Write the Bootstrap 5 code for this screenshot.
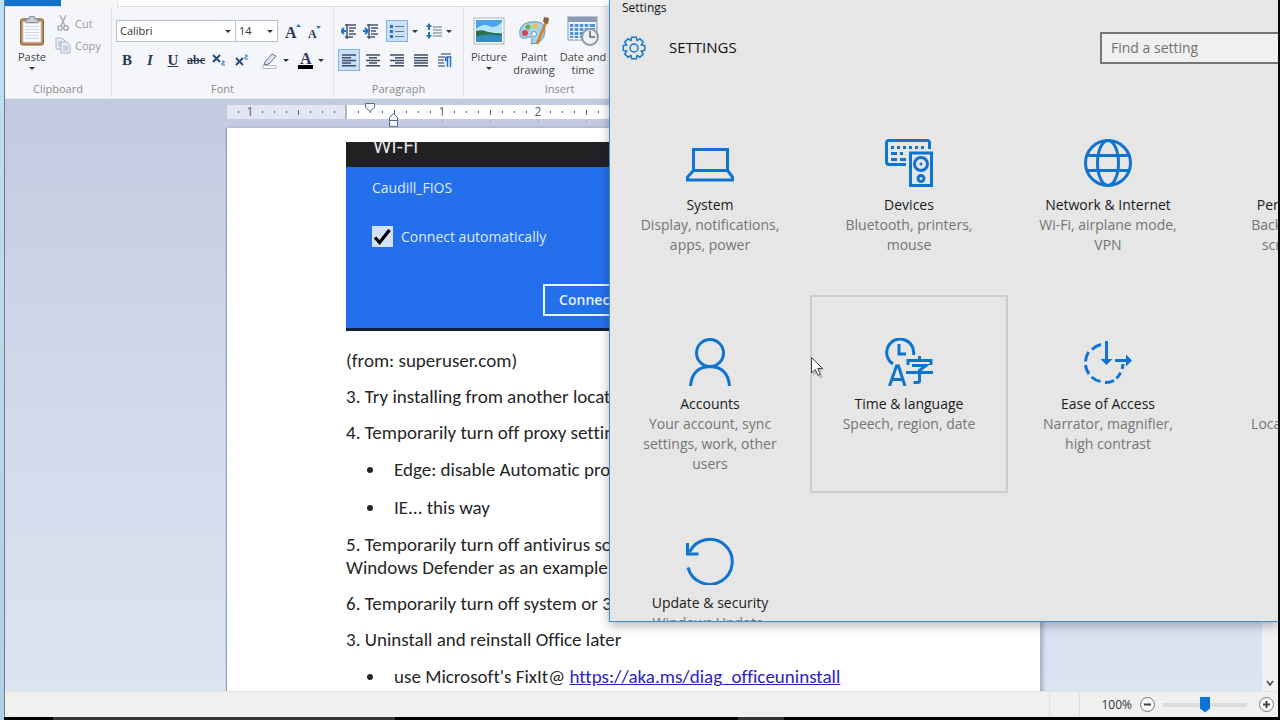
<!DOCTYPE html>
<html lang="en">
<head>
<meta charset="utf-8">
<meta name="viewport" content="width=device-width, initial-scale=1">
<title>Document - WordPad</title>
<link href="https://cdn.jsdelivr.net/npm/bootstrap@5.3.0/dist/css/bootstrap.min.css" rel="stylesheet">
<style>
  :root { --accent: #0f74cf; }
  body { font-family: "Open Sans", sans-serif; color: #111; background: #000; }
  svg { display: block; flex: none; }
  button { color: inherit; font: inherit; }
  .desktop { background: linear-gradient(#bfe0f4, #b3cfe3); padding: 0 2px 0 4px; }
  .edge { background: #000; width: 2px; right: 0; }
  .wordpad { border-left: 1px solid #6f7a8c; }

  /* ribbon */
  .tabs { height: 7px; border-bottom: 1px solid #dcdfe3; background: #fff; }
  .file-tab { width: 56px; background: #1272cc; }
  .home-tab { width: 57px; background: #f5f6f8; margin-bottom: -1px; border-right: 1px solid #dcdfe3; }
  .ribbon { background: #f5f6f9; height: 92px; font-size: 11px; line-height: 13px; color: #444; border-bottom: 1px solid #e6eaf2; }
  .group { border-right: 1px solid #e4e6ec; padding: 9px 4px 0; }
  .group-name { color: #8c8c8c; line-height: 16px; height: 17px; }
  .rows { display: flex; flex-direction: column; gap: 7px; padding-top: 4px; }
  .tool { border: 1px solid transparent; background: none; padding: 0; width: 22px; height: 22px; display: flex; align-items: center; justify-content: center; flex: none; }
  .tool.on { background: #c9e0f7; border-color: #7eb4ea; }
  .tool.wide { width: 34px; gap: 4px; }
  .glyph { font-family: "Liberation Serif", serif; font-weight: bold; font-size: 15px; color: #2b3a55; fill: #2b3a55; }
  .strike { font-size: 12px; text-decoration: line-through; }
  .big { border: 0; background: none; padding: 0; display: flex; flex-direction: column; align-items: center; gap: 4px; }
  .edit-cmd { border: 0; background: none; padding: 0; display: flex; align-items: center; gap: 4px; height: 14px; color: #9a9a9a; }
  .edit-cmd + .edit-cmd { height: 22px; }
  .caret { width: 0; height: 0; border: 3px solid transparent; border-top-color: #333; border-bottom: 0; }
  .combo { appearance: none; height: 22px; border: 1px solid #b8c2d0; border-radius: 0; padding: 0 14px 0 3px; font-size: 11px; line-height: 20px; color: #333; background: #fff url("data:image/svg+xml,%3Csvg xmlns='http://www.w3.org/2000/svg' viewBox='0 0 6 3'%3E%3Cpath d='M0 0h6L3 3z' fill='%23333'/%3E%3C/svg%3E") no-repeat right 4px center / 6px 3px; }

  /* page */
  .work { background: linear-gradient(#c2cae0, #d0d9ea 50%, #dbe5f2); }
  .sheet-col { width: 813px; }
  .ruler-row { height: 29px; padding-top: 6px; }
  .ruler-row svg { overflow: visible; }
  .sheet { background: #fff; padding: 14px 119px 0 119px; box-shadow: -1px 0 1px #929fb6, 3px 0 4px #a3b0c6; font-family: Carlito, Lato, sans-serif; font-size: 19px; line-height: 23px; color: #262626; font-variant-ligatures: none; }
  .sheet p, .sheet li { margin-bottom: 13px; }
  .sheet li { line-height: 25px; padding-left: 8px; }
  .sheet ul { padding-left: 40px; margin-bottom: 0; }
  .sheet a { color: #2b22c8; }
  .wifi { width: 400px; margin-bottom: 18px; background: #246fec; color: #dcebff; border-bottom: 3px solid #10203c; font-family: "Open Sans", sans-serif; font-size: 14px; line-height: 20px; }
  .wifi-head { background: #212123; color: #eee; height: 25px; padding-left: 27px; font-size: 20px; line-height: 8px; }
  .wifi-body { padding: 11px 0 12px 26px; height: 161px; }
  .auto-check { appearance: none; width: 21px; height: 21px; margin: 0; background: #d4dffa url("data:image/svg+xml,%3Csvg xmlns='http://www.w3.org/2000/svg' viewBox='0 0 21 21'%3E%3Cpath d='M3 11.500l4.600 5L17.500 4' fill='none' stroke='%23000' stroke-width='3.300'/%3E%3C/svg%3E"); }
  .connect { width: 88px; height: 32px; border: 2px solid #e8f1ff; background: none; font-weight: 600; color: #e8f1ff; margin-left: 171px; padding: 0; }
  .vbar { width: 16px; background: #eff0f2; color: #444; }

  /* status bar */
  .status { height: 26px; background: #f0f0ef; border-top: 1px solid #e2e2e2; font-size: 12px; color: #333; }
  .status .part { border-left: 1px solid #e0e0e0; width: 30px; }
  .status .part + .part { width: 22px; }
  .round { width: 15px; height: 15px; border: 0; background: none; padding: 0; }
  .zoom-range { appearance: none; width: 84px; height: 17px; margin: 0; background: linear-gradient(#dcdcdc, #dcdcdc) no-repeat center / 100% 4px; }
  .zoom-range::-webkit-slider-thumb { appearance: none; width: 10px; height: 16px; border: 0; background: #0a75d8; clip-path: polygon(0 0, 100% 0, 100% 75%, 50% 100%, 0 75%); }
  .taskbar { height: 3px; background: linear-gradient(90deg, #000 49px, #363636 49px 391px, #000 391px 734px, #333 734px 780px, #000 780px); }

  /* settings window */
  .settings { left: 609px; top: 0; right: 2px; height: 622px; background: #e6e6e6; border: 1px solid #3f8fca; border-top: 0; border-right: 0; box-shadow: 0 3px 10px rgba(20, 30, 50, .35); }
  .caption { font-size: 12px; line-height: 16px; padding-left: 12px; }
  .settings-head { padding: 16px 0 33px 12px; font-size: 15px; font-weight: 500; height: 80px; gap: 23px; }
  .find { width: 280px; height: 32px; border: 2px solid #767676; border-radius: 0; background: #f0f0f0; padding: 0 9px; font-size: 14px; flex: none; }
  .find::placeholder { color: #707070; }
  .find-slot { margin-left: auto; width: 178px; overflow: hidden; }
  .tiles { display: grid; grid-template-columns: repeat(4, 198px); grid-auto-rows: 198px; gap: 1px; padding-left: 1px; }
  .tile { border: 1px solid transparent; padding: 42px 22px 0; text-align: center; text-decoration: none; color: #1b1b1b; font-size: 14px; line-height: 20px; display: flex; flex-direction: column; align-items: center; }
  .tile svg, .tile .blank { width: 48px; height: 48px; margin-bottom: 8px; flex: none; fill: none; stroke: var(--accent); stroke-width: 3; }
  .tile small { color: #757575; font-size: 14px; display: block; }
  .tile.hover { border: 2px solid #cdcdcd; padding: 41px 21px 0; }
  .pointer { left: 810px; top: 356px; }
</style>
</head>
<body class="vh-100 overflow-hidden">
<div class="desktop position-relative h-100 d-flex flex-column overflow-hidden">
  <main class="wordpad flex-fill d-flex flex-column overflow-hidden">
    <div class="tabs d-flex flex-shrink-0"><div class="file-tab"></div><div class="home-tab"></div></div>

    <div class="ribbon d-flex flex-shrink-0">
      <section class="group d-flex flex-column" style="width:107px">
        <div class="d-flex flex-fill">
          <button class="big ms-2 me-2" style="width:30px" type="button">
            <svg width="26" height="30" viewBox="0 1 26 31" preserveAspectRatio="none"><rect x="1.500" y="4" width="23" height="27" rx="2" fill="#b98a52" stroke="#8a6434"/><path d="M4 7h18v21H4z" fill="#fafcff" stroke="#ccd"/><path d="M6 12h14M6 15h14M6 18h14M6 21h14M6 24h14" stroke="#cbd3df"/><path d="M7 8V4h3q0-3 3-3t3 3h3v4z" fill="#c9ced6" stroke="#777f8b"/></svg>
            <span>Paste</span><i class="caret"></i>
          </button>
          <div class="d-flex flex-column gap-1">
            <button class="edit-cmd" type="button">
              <svg width="16" height="18" viewBox="0 0 16 18" fill="none" stroke="#a9adb5" stroke-width="1.500"><path d="M5 1l5 11M11 1L6 12"/><circle cx="5" cy="14" r="2.200"/><circle cx="11" cy="14" r="2.200"/></svg>Cut</button>
            <button class="edit-cmd" type="button">
              <svg width="16" height="17" viewBox="0 0 16 17" fill="#e9edf6" stroke="#a9b3ca"><path d="M1 1h6l3 3v8H1z"/><path d="M3 5h4M3 7h4M3 9h4"/><path d="M6 5h6l3 3v8H6z"/><path d="M8 9h5M8 11h5M8 13h5"/></svg>Copy</button>
          </div>
        </div>
        <div class="group-name text-center">Clipboard</div>
      </section>

      <section class="group d-flex flex-column" style="width:222px">
        <div class="rows flex-fill">
          <div class="d-flex">
            <select class="combo" style="width:120px" aria-label="Font family"><option>Calibri</option></select>
            <select class="combo border-start-0" style="width:42px" aria-label="Font size"><option>14</option></select>
            <button class="tool glyph ms-1" type="button" aria-label="Grow font"><svg width="16" height="17" viewBox="0 0 16 17"><text x="0" y="15" font-size="16">A</text><path d="M11 4l2.500-3L16 4z" fill="#2f78c4"/></svg></button>
            <button class="tool glyph" type="button" aria-label="Shrink font"><svg width="16" height="17" viewBox="0 0 16 17"><text x="1" y="15" font-size="12">A</text><path d="M9 3h5l-2.500 3z" fill="#2f78c4"/></svg></button>
          </div>
          <div class="d-flex" style="gap:1px">
            <button class="tool glyph" type="button">B</button>
            <button class="tool glyph fst-italic" type="button">I</button>
            <button class="tool glyph text-decoration-underline" type="button">U</button>
            <button class="tool glyph strike" type="button">abc</button>
            <button class="tool" type="button" aria-label="Subscript"><svg width="14" height="14" viewBox="0 0 14 14"><path d="M1 2l7 7M8 2L1 9" stroke="#2b4a75" stroke-width="2"/><path d="M10 8h2v2h-2v2h3" fill="none" stroke="#2f78c4"/></svg></button>
            <button class="tool" type="button" aria-label="Superscript"><svg width="14" height="14" viewBox="0 0 14 14"><path d="M1 5l7 7M8 5l-7 7" stroke="#2b4a75" stroke-width="2"/><path d="M10 2h2v2h-2v2h3" fill="none" stroke="#2f78c4"/></svg></button>
            <button class="tool wide ms-1" type="button" aria-label="Highlight"><svg width="18" height="18" viewBox="0 0 18 18"><path d="M4 11L11 3l4 2-7 8-5 1z" fill="#dde3ee" stroke="#66738c"/><path d="M2 14.500h13v3H2z" fill="#fff" stroke="#b5bccb"/></svg><i class="caret"></i></button>
            <button class="tool wide" type="button" aria-label="Text color"><svg class="glyph" width="17" height="18" viewBox="0 0 17 18"><text x="3" y="13" font-size="16">A</text><path d="M1 14h15v4H1z" fill="#000"/></svg><i class="caret"></i></button>
          </div>
        </div>
        <div class="group-name text-center">Font</div>
      </section>

      <section class="group d-flex flex-column" style="width:130px">
        <div class="rows flex-fill">
          <div class="d-flex align-items-center">
            <button class="tool" type="button" aria-label="Decrease indent"><svg width="16" height="16" viewBox="0 0 16 16" fill="none" stroke="#46566f" stroke-width="1.500"><path d="M4 2h11M8 5h7M8 8h5M8 11h7M4 14h8M6 1v15"/><path d="M5 8H1m2-3L0 8l3 3" stroke="#2472c8" stroke-width="2"/></svg></button>
            <button class="tool me-1" type="button" aria-label="Increase indent"><svg width="16" height="16" viewBox="0 0 16 16" fill="none" stroke="#46566f" stroke-width="1.500"><path d="M4 2h11M8 5h7M8 8h5M8 11h7M4 14h8M6 1v15"/><path d="M0 8h5M2 5l3 3-3 3" stroke="#2472c8" stroke-width="2"/></svg></button>
            <button class="tool on" type="button" aria-label="Bullets"><svg width="16" height="14" viewBox="0 0 16 14"><path d="M1 1h3v3H1zM1 6h3v3H1zM1 11h3v3H1z" fill="#2a6cc0"/><path d="M6 2.500h9M6 7.500h9M6 12.500h9" stroke="#66758c"/></svg></button>
            <i class="caret mx-1"></i>
            <button class="tool wide" type="button" aria-label="Line spacing"><svg width="16" height="17" viewBox="0 0 16 17"><path d="M3 0l3 4H4v3H2V4H0zM3 16l3-4H4V9H2v3H0z" fill="#2472c8"/><path d="M7 4h9M7 7h9M7 10h9M7 13h9" stroke="#66758c"/></svg><i class="caret"></i></button>
          </div>
          <div class="d-flex" style="gap:2px">
            <button class="tool on" type="button" aria-label="Align left"><svg width="14" height="13" viewBox="0 0 14 13" stroke="#3f4e66" stroke-width="1.500"><path d="M0 1h14M0 3.700h9M0 6.400h14M0 9.100h9M0 11.800h14"/></svg></button>
            <button class="tool" type="button" aria-label="Center"><svg width="14" height="13" viewBox="0 0 14 13" stroke="#3f4e66" stroke-width="1.500"><path d="M0 1h14M3 3.700h8M0 6.400h14M3 9.100h8M0 11.800h14"/></svg></button>
            <button class="tool" type="button" aria-label="Align right"><svg width="14" height="13" viewBox="0 0 14 13" stroke="#3f4e66" stroke-width="1.500"><path d="M0 1h14M5 3.700h9M0 6.400h14M5 9.100h9M0 11.800h14"/></svg></button>
            <button class="tool" type="button" aria-label="Justify"><svg width="14" height="13" viewBox="0 0 14 13" stroke="#3f4e66" stroke-width="1.500"><path d="M0 1h14M0 3.700h14M0 6.400h14M0 9.100h14M0 11.800h14"/></svg></button>
            <button class="tool" type="button" aria-label="Paragraph"><svg width="14" height="15" viewBox="0 0 14 15" fill="none"><path d="M3 1h10M0 4h7M0 7h6M0 10h6M0 13h7" stroke="#66758c" stroke-width="1.500"/><path d="M9.500 14V4M12.500 14V4M13.500 4h-4q-2 0-2 2t2 2" stroke="#2472c8" stroke-width="1.500"/></svg></button>
          </div>
        </div>
        <div class="group-name text-center">Paragraph</div>
      </section>

      <section class="group d-flex flex-column" style="width:192px">
        <div class="d-flex flex-fill">
          <button class="big" type="button" style="width:42px">
            <svg width="32" height="30" viewBox="0 0 32 30"><rect x="1" y="2" width="30" height="26" fill="#fff" stroke="#a8b2c0"/><path d="M3 4h26v22H3z" fill="#4aa5e6"/><path d="M3 13q7-6 13-3t13-4v11H3z" fill="#b5e4f8"/><path d="M3 15q7-2 12 1l14 2v4H3z" fill="#297049"/><path d="M3 20q14-3 26 0v6H3z" fill="#338dc0"/></svg>
            <span>Picture</span><i class="caret"></i>
          </button>
          <button class="big" type="button" style="width:48px">
            <svg width="32" height="30" viewBox="0 0 32 30"><path d="M2 20Q0 8 12 6q16-2 15 9-1 13-14 13 3-8-3-7-6 3-8-1z" fill="#a9d3ec" stroke="#629abd"/><circle cx="7" cy="17" r="3" fill="#da4059"/><circle cx="10" cy="11" r="2.500" fill="#6daf43"/><circle cx="17" cy="10" r="2.500" fill="#f0c13f"/><circle cx="16" cy="18" r="2.500" fill="#fff" stroke="#629abd"/><path d="M29 4L19 28" stroke="#c98734" stroke-width="3"/><path d="M26 1l5 1-1 6-5-2z" fill="#935f3f"/></svg>
            <span>Paint drawing</span>
          </button>
          <button class="big" type="button" style="width:50px">
            <svg width="33" height="30" viewBox="0 0 33 30"><rect x="1" y="1" width="29" height="23" fill="#eef6ff" stroke="#8496ad"/><path d="M1 1h29v5H1z" fill="#8a9bb3"/><path d="M3 8h25v3H3zM3 12h25v3H3zM3 16h15v3H3zM3 20h12v2H3z" fill="#4e91dc"/><path d="M7 7v17M12 7v17M17 7v12M22 7v9" stroke="#e6f0fa" stroke-width="1.500"/><circle cx="23" cy="21" r="8" fill="#edf0f3" stroke="#8e969f" stroke-width="2"/><path d="M23 15v6h5" fill="none" stroke="#59616b" stroke-width="1.500"/></svg>
            <span>Date and time</span>
          </button>
        </div>
        <div class="group-name text-center">Insert</div>
      </section>
    </div>

    <div class="work flex-fill d-flex overflow-hidden">
      <div class="flex-fill d-flex flex-column align-items-center overflow-hidden">
        <div class="sheet-col ruler-row flex-shrink-0">
          <svg id="ruler" width="100%" height="23" font-family="Open Sans" font-size="12" fill="#56617a"><rect width="119" height="14" fill="#e2e6f0"/><rect x="119" width="694" height="14" fill="#fff"/><path d="M119 0v14" stroke="#6f7a92"/></svg>
        </div>
        <article class="sheet sheet-col flex-fill">
          <div class="wifi">
            <div class="wifi-head overflow-hidden">Wi-Fi</div>
            <div class="wifi-body d-flex flex-column">
              <div>Caudill_FIOS</div>
              <label class="d-flex align-items-center gap-2 mt-4 pt-1"><input class="auto-check" type="checkbox" checked>Connect automatically</label>
              <button class="connect mt-auto" type="button">Connect</button>
            </div>
          </div>
          <p>(from: superuser.com)</p>
          <p>3. Try installing from another location</p>
          <p>4. Temporarily turn off proxy settings</p>
          <ul><li>Edge: disable Automatic proxy</li><li>IE... this way</li></ul>
          <p>5. Temporarily turn off antivirus software<br>Windows Defender as an example</p>
          <p>6. Temporarily turn off system or 3rd party</p>
          <p>3. Uninstall and reinstall Office later</p>
          <ul><li>use Microsoft's FixIt@ <a href="https://aka.ms/diag_officeuninstall">https://aka.ms/diag_officeuninstall</a></li></ul>
        </article>
      </div>
      <div class="vbar d-flex align-items-end justify-content-center pb-1"><svg width="8" height="8" viewBox="0 0 8 8" fill="none" stroke="#444" stroke-width="1.500"><path d="M1 2l3 4 3-4"/></svg></div>
    </div>

    <footer class="status d-flex align-items-center justify-content-end flex-shrink-0">
      <div class="part h-100"></div><div class="part h-100"></div>
      <label for="zoom" class="me-2">100%</label>
      <button class="round" type="button" aria-label="Zoom out"><svg width="15" height="15" viewBox="0 0 15 15" fill="#fafafa" stroke="#777"><circle cx="7.500" cy="7.500" r="7"/><path d="M4 7.500h7" stroke="#444" stroke-width="2"/></svg></button>
      <input class="zoom-range mx-2" id="zoom" type="range" min="0" max="100" value="50">
      <button class="round ms-1 me-1" type="button" aria-label="Zoom in"><svg width="15" height="15" viewBox="0 0 15 15" fill="#fafafa" stroke="#777"><circle cx="7.500" cy="7.500" r="7"/><path d="M4 7.500h7M7.500 4v7" stroke="#444" stroke-width="2"/></svg></button>
    </footer>
  </main>
  <div class="taskbar flex-shrink-0"></div>
  <div class="edge position-absolute top-0 bottom-0"></div>

  <section class="settings position-absolute overflow-hidden">
    <div class="caption">Settings</div>
    <header class="settings-head d-flex align-items-center">
      <svg id="gear" width="24" height="24" viewBox="-12 -12 24 24" fill="none" stroke="#1478cf" stroke-width="1.500"><circle r="4"/></svg>
      <span>SETTINGS</span>
      <div class="find-slot"><input class="find" type="search" placeholder="Find a setting" aria-label="Find a setting"></div>
    </header>
    <nav class="tiles" aria-label="Settings categories">
      <a class="tile" href="#system"><svg viewBox="0 0 48 48"><path d="M7.500 10.500h34v21h-34zM7.500 31.500L1.500 38v3h45v-3l-5-6.500"/></svg>System<small>Display, notifications, apps, power</small></a>
      <a class="tile" href="#devices"><svg viewBox="0 0 48 48"><path d="M21 25.500H4q-2.500 0-2.500-2.500V4Q1.500 1.500 4 1.500h38q2.500 0 2.500 2.500v6"/><path d="M6 8.500h33" stroke-dasharray="3 3"/><path d="M6 14.500h6M15 14.500h3M6 20.500h6M15 20.500h6"/><path d="M25.500 14h21v32.500h-21z"/><circle cx="36" cy="25" r="6.500"/><circle cx="36" cy="25" r="1.500" fill="#0f74cf" stroke="none"/><circle cx="36" cy="39.500" r="3"/></svg>Devices<small>Bluetooth, printers, mouse</small></a>
      <a class="tile" href="#network"><svg viewBox="0 0 48 48"><circle cx="24" cy="24" r="22.500"/><ellipse cx="24" cy="24" rx="10.500" ry="22.500"/><path d="M3 16.500h42M3 31.500h42"/></svg>Network &amp; Internet<small>Wi-Fi, airplane mode, VPN</small></a>
      <a class="tile" href="#personalization"><span class="blank"></span>Personalization<small>Background, lock screen, colors</small></a>
      <a class="tile" href="#accounts"><svg viewBox="0 0 48 48"><circle cx="24" cy="15" r="13.500"/><path d="M4.500 48Q6 29 24 28.500 42 29 43.500 48"/></svg>Accounts<small>Your account, sync settings, work, other users</small></a>
      <a class="tile hover" href="#time"><svg viewBox="0 0 48 48"><path d="M8 26A13.500 13.500 0 1 1 28.500 17"/><path d="M14 6v10h7"/><path d="M4.500 48L11.500 28h2L20 48M7 41.500h11"/><path d="M34.500 18v4M23 27v-4.500h23V27M27 27.500h14l-6.500 5V43q0 1.500-2 1.500h-4M21 34.500h27"/></svg>Time &amp; language<small>Speech, region, date</small></a>
      <a class="tile" href="#ease"><svg viewBox="0 0 48 48"><path d="M17 6.500a18.500 18.500 0 0 0-9 5M4.500 14a18.500 18.500 0 0 0-3 9.500M1.500 27a18.500 18.500 0 0 0 3.500 9M7.500 39a18.500 18.500 0 0 0 9 4.500M21 44.500a18.500 18.500 0 0 0 9-2M32.500 40.500a18.500 18.500 0 0 0 4-6M38 31q1-3 1-5"/><path d="M22.500 3v20M31 22.500h13"/><path d="M16.500 21h12l-6 6zM42 16.500v12l6-6z" fill="#0f74cf" stroke="none"/></svg>Ease of Access<small>Narrator, magnifier, high contrast</small></a>
      <a class="tile" href="#privacy"><span class="blank"></span>Privacy<small>Location, camera</small></a>
      <a class="tile" href="#update"><svg viewBox="0 0 48 48"><path d="M2 30.500A22.500 22.500 0 1 0 3.500 15"/><path d="M1.500 6v11h11"/></svg>Update &amp; security<small>Windows Update, recovery, backup</small></a>
    </nav>
  </section>

  <svg class="pointer position-absolute" width="16" height="24" viewBox="0 0 16 24"><path d="M3 4l11 10-4 1 3 6-3 2-3-6-4 3z" fill="#000" opacity=".15"/><path d="M1.500 1.500v15.500l3.700-3.500 2.600 5.800 2.500-1.100-2.600-5.700H12.500z" fill="#fff" stroke="#444"/></svg>
</div>

<script src="https://cdn.jsdelivr.net/npm/bootstrap@5.3.0/dist/js/bootstrap.bundle.min.js"></script>
<script>
  // Ruler: eight ticks to the inch, a number on each inch, zero at the left margin
  const ruler = document.getElementById('ruler'), zero = 119;
  let marks = '';
  for (let i = -9; i <= 57; i++) {
    const x = zero + i * 12;
    if (i === 0) continue;
    if (i % 8 === 0) marks += `<text x="${x}" y="11" text-anchor="middle">${Math.abs(i / 8)}</text>`;
    else marks += i % 4 === 0 ? `<rect x="${x}" y="5" width="1" height="5"/>` : `<rect x="${x}" y="6" width="1" height="2"/>`;
    if (i > 0 && i % 4 === 0) marks += `<rect x="${x}" y="15" width="1" height="2" fill="#9aa5bc"/>`;
  }
  marks += '<g fill="#f4f6fa" stroke="#5c6880"><path d="M138.500-1.500h9v4l-4.500 4-4.500-4z"/><path d="M162.500 21.500v-9l4-4 4 4v9zM162.500 15.500h8"/></g>';
  ruler.insertAdjacentHTML('beforeend', marks);

  // Gear outline with eight teeth
  let d = '';
  for (let t = 0; t < 8; t++) {
    [[-.38, 8], [-.22, 11], [.22, 11], [.38, 8]].forEach(([o, r], k) => {
      const a = t * Math.PI / 4 + o;
      d += (t || k ? 'L' : 'M') + (r * Math.cos(a)).toFixed(1) + ' ' + (r * Math.sin(a)).toFixed(1);
    });
  }
  document.getElementById('gear').insertAdjacentHTML('beforeend', `<path d="${d}Z"/>`);
</script>
</body>
</html>
